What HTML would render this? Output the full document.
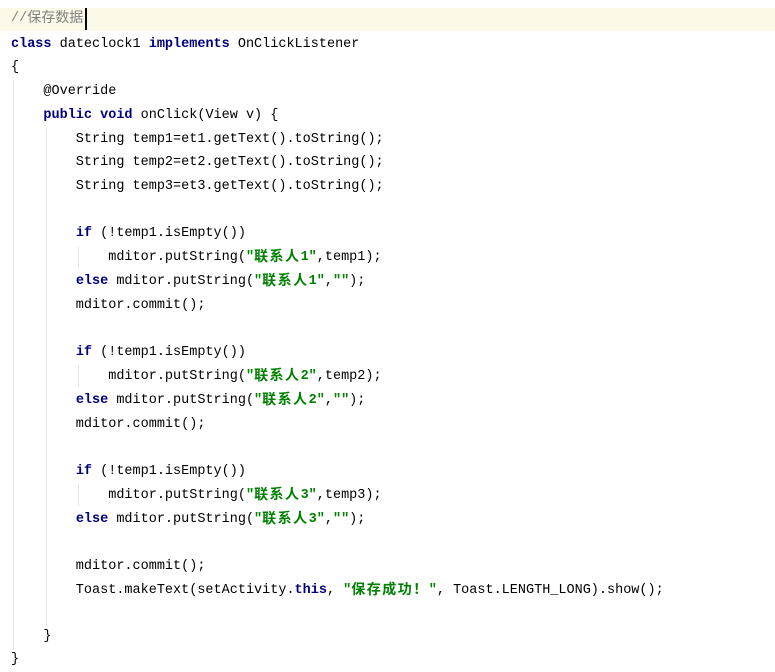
<!DOCTYPE html>
<html><head><meta charset="utf-8"><style>
html,body{margin:0;padding:0;background:#fff;width:775px;height:671px;overflow:hidden}
.l{position:absolute;left:11px;height:23.7px;line-height:23.7px;white-space:pre;font-family:"Liberation Mono","Noto Sans CJK SC",monospace;font-size:13.5px;color:#000}
.k{color:#000080;font-weight:bold}
.s{color:#008000;font-weight:bold}
.z{font-family:"Noto Sans CJK SC",sans-serif;letter-spacing:1.5px;font-size:14px;line-height:1;display:inline-block;vertical-align:-1px}
.c{color:#808080}
.g{position:absolute;width:1px;background:#e4e4e4}
.hl{position:absolute;left:0;top:8px;width:775px;height:23px;background:#fdf9e8}
.cur{position:absolute;left:85px;top:8px;width:2px;height:22px;background:#000}
</style></head><body>
<div class="hl"></div>
<div class="g" style="left:13px;top:80px;height:570px"></div>
<div class="g" style="left:46px;top:128px;height:498px"></div>
<div class="g" style="left:78px;top:247px;height:22px"></div>
<div class="g" style="left:78px;top:365px;height:22px"></div>
<div class="g" style="left:78px;top:484px;height:22px"></div>
<div class="l" style="top:7px"><span class="c">//<span class="z" style="letter-spacing:0">保存数据</span></span></div>
<div class="cur"></div>
<div class="l" style="top:33px"><span class="k">class</span> dateclock1 <span class="k">implements</span> OnClickListener</div>
<div class="l" style="top:56px">{</div>
<div class="l" style="top:80px">    @Override</div>
<div class="l" style="top:104px">    <span class="k">public void</span> onClick(View v) {</div>
<div class="l" style="top:128px">        String temp1=et1.getText().toString();</div>
<div class="l" style="top:151px">        String temp2=et2.getText().toString();</div>
<div class="l" style="top:175px">        String temp3=et3.getText().toString();</div>
<div class="l" style="top:222px">        <span class="k">if</span> (!temp1.isEmpty())</div>
<div class="l" style="top:246px">            mditor.putString(<span class="s">"<span class="z">联系人</span>1"</span>,temp1);</div>
<div class="l" style="top:270px">        <span class="k">else</span> mditor.putString(<span class="s">"<span class="z">联系人</span>1"</span>,<span class="s">""</span>);</div>
<div class="l" style="top:294px">        mditor.commit();</div>
<div class="l" style="top:341px">        <span class="k">if</span> (!temp1.isEmpty())</div>
<div class="l" style="top:365px">            mditor.putString(<span class="s">"<span class="z">联系人</span>2"</span>,temp2);</div>
<div class="l" style="top:389px">        <span class="k">else</span> mditor.putString(<span class="s">"<span class="z">联系人</span>2"</span>,<span class="s">""</span>);</div>
<div class="l" style="top:413px">        mditor.commit();</div>
<div class="l" style="top:460px">        <span class="k">if</span> (!temp1.isEmpty())</div>
<div class="l" style="top:484px">            mditor.putString(<span class="s">"<span class="z">联系人</span>3"</span>,temp3);</div>
<div class="l" style="top:508px">        <span class="k">else</span> mditor.putString(<span class="s">"<span class="z">联系人</span>3"</span>,<span class="s">""</span>);</div>
<div class="l" style="top:555px">        mditor.commit();</div>
<div class="l" style="top:579px">        Toast.makeText(setActivity.<span class="k">this</span>, <span class="s">"<span class="z">保存成功！</span>"</span>, Toast.LENGTH_LONG).show();</div>
<div class="l" style="top:625px">    }</div>
<div class="l" style="top:648px">}</div>
</body></html>
